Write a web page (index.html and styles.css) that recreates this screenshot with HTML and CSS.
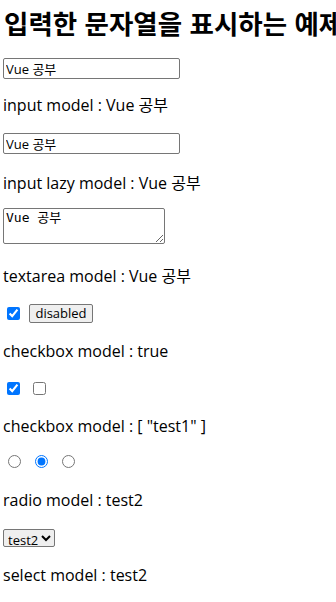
FILE: index.html
```html
<!DOCTYPE html>
<html lang="ko">

<head>
  <meta charset="UTF-8">
  <meta name="viewport" content="width=device-width, initial-scale=1.0">
  <title>v-model 예제</title>
  <link rel="stylesheet" href="styles.css">
</head>

<body>
  <div id="app">
    <h1 class="title">입력한 문자열을 표시하는 예제</h1>

    <div class="row row-input">
      <input class="text-input" type="text" value="Vue 공부" />
    </div>
    <p class="out out-1">input model : Vue 공부</p>

    <div class="row row-lazy">
      <input class="text-input" type="text" value="Vue 공부" />
    </div>
    <p class="out out-2">input lazy model : Vue 공부</p>

    <div class="row row-area">
      <textarea class="area">Vue 공부</textarea>
    </div>
    <p class="out out-3">textarea model : Vue 공부</p>

    <div class="row row-check">
      <input class="check" type="checkbox" checked />
      <button class="btn" type="button">disabled</button>
    </div>
    <p class="out out-4">checkbox model : true</p>

    <div class="row row-checks">
      <input class="check" type="checkbox" value="test1" checked />
      <input class="check" type="checkbox" value="test2" />
    </div>
    <p class="out out-5">checkbox model : [ "test1" ]</p>

    <div class="row row-radios">
      <input class="radio" type="radio" name="radio" value="test1" />
      <input class="radio" type="radio" name="radio" value="test2" checked />
      <input class="radio" type="radio" name="radio" value="test3" />
    </div>
    <p class="out out-6">radio model : test2</p>

    <div class="row row-select">
      <select class="pick" name="select">
        <option value="test1">test1</option>
        <option value="test2" selected>test2</option>
        <option value="test3">test3</option>
      </select>
    </div>
    <p class="out out-7">select model : test2</p>
  </div>
</body>

</html>
```

FILE: styles.css
```css
html,
body {
  overflow: hidden;
}

body {
  margin: 0;
  padding-left: 3px;
  color: #000;
  font-family: "Open Sans", "Noto Sans CJK KR", sans-serif;
  font-size: 16px;
}

.title {
  margin: 8px 0 0;
  height: 30px;
  line-height: 30px;
  padding-left: 1px;
  font-size: 26.5px;
  font-weight: bold;
  font-family: "Noto Sans CJK KR", sans-serif;
  white-space: nowrap;
  overflow: hidden;
}

.row {
  display: flex;
  align-items: center;
}

.out {
  margin: 0;
  height: 20px;
  line-height: 20px;
}

.text-input {
  box-sizing: border-box;
  width: 177px;
  height: 21px;
  margin: 0;
  padding: 1px 2px;
  border: 1px solid #767676;
  border-radius: 2px;
  font-family: "Open Sans", "Noto Sans CJK KR", sans-serif;
  font-size: 13px;
}

.area {
  box-sizing: border-box;
  width: 162px;
  height: 36px;
  margin: 0;
  padding: 1px 2px;
  border: 1px solid #767676;
  border-radius: 2px;
  font-family: "DejaVu Sans Mono", "Noto Sans CJK KR", monospace;
  font-size: 13px;
  line-height: 15px;
}

.check {
  width: 13px;
  height: 13px;
  margin: 0 9px 0 4px;
}

.row-checks .check + .check {
  margin-left: 4px;
}

.radio {
  width: 13px;
  height: 13px;
  margin: 0 9px 0 5px;
}

.btn {
  box-sizing: border-box;
  width: 64px;
  height: 19px;
  margin: 0;
  padding: 0 4px;
  border: 1px solid #767676;
  border-radius: 2px;
  background: #efefef;
  font-family: "Open Sans", sans-serif;
  font-size: 13px;
  line-height: 15px;
}

.pick {
  box-sizing: border-box;
  width: 52px;
  height: 18px;
  margin: 0;
  border: 1px solid #767676;
  border-radius: 2px;
  font-family: "Open Sans", sans-serif;
  font-size: 13px;
}

.row-input { margin-top: 20px; }
.out-1 { margin-top: 16px; }
.row-lazy { margin-top: 18px; }
.out-2 { margin-top: 19px; }
.row-area { margin-top: 15px; }
.out-3 { margin-top: 22px; }
.row-check { margin-top: 18px; }
.out-4 { margin-top: 18px; }
.row-checks { margin-top: 20px; height: 14px; }
.out-5 { margin-top: 21px; }
.row-radios { margin-top: 19px; height: 13px; }
.out-6 { margin-top: 22px; }
.row-select { margin-top: 19px; }
.out-7 { margin-top: 18px; }
```
